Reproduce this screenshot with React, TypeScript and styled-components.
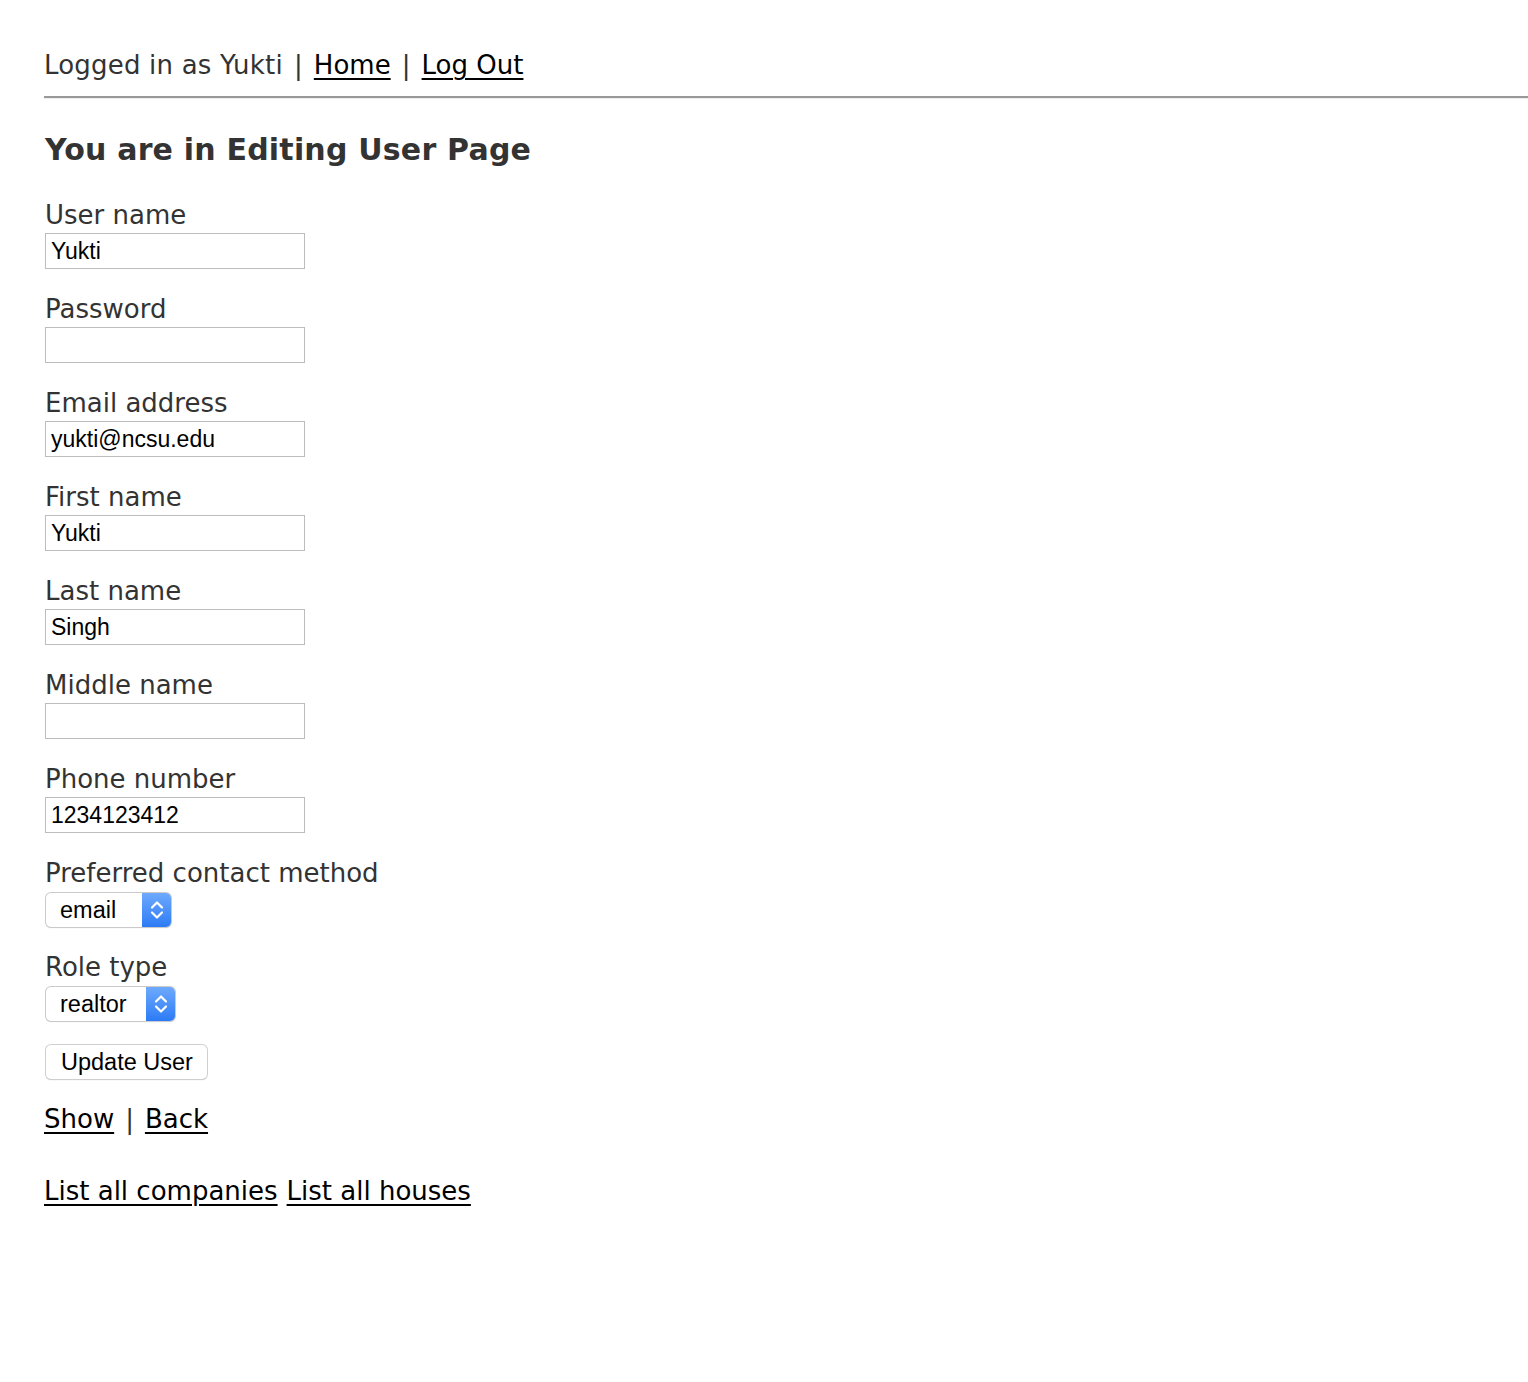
import React from "react";
import styled, { createGlobalStyle } from "styled-components";

const Global = createGlobalStyle`
  html, body { margin: 0; padding: 0; background: #fff; }
  body {
    color: #333;
    font-family: "DejaVu Sans", Verdana, sans-serif;
    font-size: 26px;
    line-height: 36px;
  }
`;

const Page = styled.div`
  padding: 47px 0 0 44px;
`;

const Header = styled.p`
  margin: 0;
  line-height: 36px;
  letter-spacing: 0.2px;
`;

const Rule = styled.hr`
  margin: 13px 0 0 0;
  height: 2px;
  border: 0;
  background: #999;
  border-bottom: 1px solid #eee;
  box-sizing: content-box;
`;

const Title = styled.h1`
  margin: 33px 0 29px 1px;
  font-size: 30px;
  line-height: 36px;
  font-weight: bold;
  letter-spacing: 0.2px;
`;

const Link = styled.a`
  color: #000;
  text-decoration: underline;
  text-underline-offset: 4px;
  text-decoration-thickness: 2px;
  letter-spacing: 0;
`;

const Sep = styled.span`
  margin: 0 11px;
`;

const Field = styled.div`
  display: flow-root;
  margin: 0 0 20px 1px;
`;

const Label = styled.label`
  display: block;
  line-height: 36px;
`;

const TextInput = styled.input`
  display: block;
  box-sizing: border-box;
  width: 260px;
  height: 36px;
  margin: 0 0 2px 0;
  padding: 0 5px;
  border: 1px solid #bdbdbd;
  font-family: "Liberation Sans", Arial, sans-serif;
  font-size: 23px;
  color: #000;
  background: #fff;
  outline: none;
`;

const SelectBox = styled.div<{ $w: number }>`
  display: flex;
  box-sizing: border-box;
  width: ${(p) => p.$w}px;
  height: 34px;
  margin: 2px 0 2px 1px;
  border-radius: 5px;
  background: #fff;
  box-shadow: 0 0 0 1px #cacaca, 0 1px 1px rgba(0, 0, 0, 0.22);
  overflow: hidden;
`;

const NativeSelect = styled.select`
  appearance: none;
  -webkit-appearance: none;
  flex: 1;
  min-width: 0;
  border: 0;
  background: transparent;
  padding: 0 0 0 14px;
  font-family: "Liberation Sans", Arial, sans-serif;
  font-size: 23.5px;
  color: #000;
  outline: none;
`;

const Arrow = styled.span`
  display: flex;
  align-items: center;
  justify-content: center;
  width: 29px;
  background: linear-gradient(#6eaafd, #2c7bf6);
`;

const ActionRow = styled.div`
  margin: 0 0 20px 1px;
  height: 38px;
  display: flex;
  align-items: center;
`;

const Button = styled.button`
  box-sizing: border-box;
  height: 34px;
  margin-left: 1px;
  padding: 0 14px 0 15px;
  border: 0;
  border-radius: 5px;
  background: #fff;
  box-shadow: 0 0 0 1px #cfcfcf, 0 1px 1px rgba(0, 0, 0, 0.3);
  font-family: "Liberation Sans", Arial, sans-serif;
  font-size: 23.5px;
  color: #000;
`;

const Nav = styled.p<{ $top?: number }>`
  margin: ${(p) => p.$top ?? 0}px 0 0 0;
  line-height: 36px;
`;

const Gap = styled.span`
  margin-left: 9px;
`;

function Chevrons() {
  return (
    <svg width="16" height="24" viewBox="0 0 16 24" fill="none">
      <path d="M3 9.5 L8 4.5 L13 9.5" stroke="#fff" strokeWidth="2.2" strokeLinecap="round" strokeLinejoin="round" />
      <path d="M3 14.5 L8 19.5 L13 14.5" stroke="#fff" strokeWidth="2.2" strokeLinecap="round" strokeLinejoin="round" />
    </svg>
  );
}

const textFields: { label: string; value: string; type?: string }[] = [
  { label: "User name", value: "Yukti" },
  { label: "Password", value: "", type: "password" },
  { label: "Email address", value: "yukti@ncsu.edu" },
  { label: "First name", value: "Yukti" },
  { label: "Last name", value: "Singh" },
  { label: "Middle name", value: "" },
  { label: "Phone number", value: "1234123412" },
];

export default function App() {
  return (
    <>
      <Global />
      <Page>
        <Header>
          Logged in as Yukti<Sep>|</Sep>
          <Link href="#">Home</Link>
          <Sep>|</Sep>
          <Link href="#">Log Out</Link>
        </Header>
        <Rule />
        <Title>You are in Editing User Page</Title>
        <form onSubmit={(e) => e.preventDefault()}>
          {textFields.map((f) => (
            <Field key={f.label}>
              <Label>{f.label}</Label>
              <TextInput type={f.type ?? "text"} defaultValue={f.value} />
            </Field>
          ))}
          <Field>
            <Label>Preferred contact method</Label>
            <SelectBox $w={125}>
              <NativeSelect defaultValue="email">
                <option value="email">email</option>
                <option value="phone">phone</option>
              </NativeSelect>
              <Arrow>
                <Chevrons />
              </Arrow>
            </SelectBox>
          </Field>
          <Field>
            <Label>Role type</Label>
            <SelectBox $w={129}>
              <NativeSelect defaultValue="realtor">
                <option value="realtor">realtor</option>
                <option value="hunter">hunter</option>
              </NativeSelect>
              <Arrow>
                <Chevrons />
              </Arrow>
            </SelectBox>
          </Field>
          <ActionRow>
            <Button type="submit">Update User</Button>
          </ActionRow>
        </form>
        <Nav>
          <Link href="#">Show</Link>
          <Sep>|</Sep>
          <Link href="#">Back</Link>
        </Nav>
        <Nav $top={36}>
          <Link href="#">List all companies</Link>
          <Gap />
          <Link href="#">List all houses</Link>
        </Nav>
      </Page>
    </>
  );
}
